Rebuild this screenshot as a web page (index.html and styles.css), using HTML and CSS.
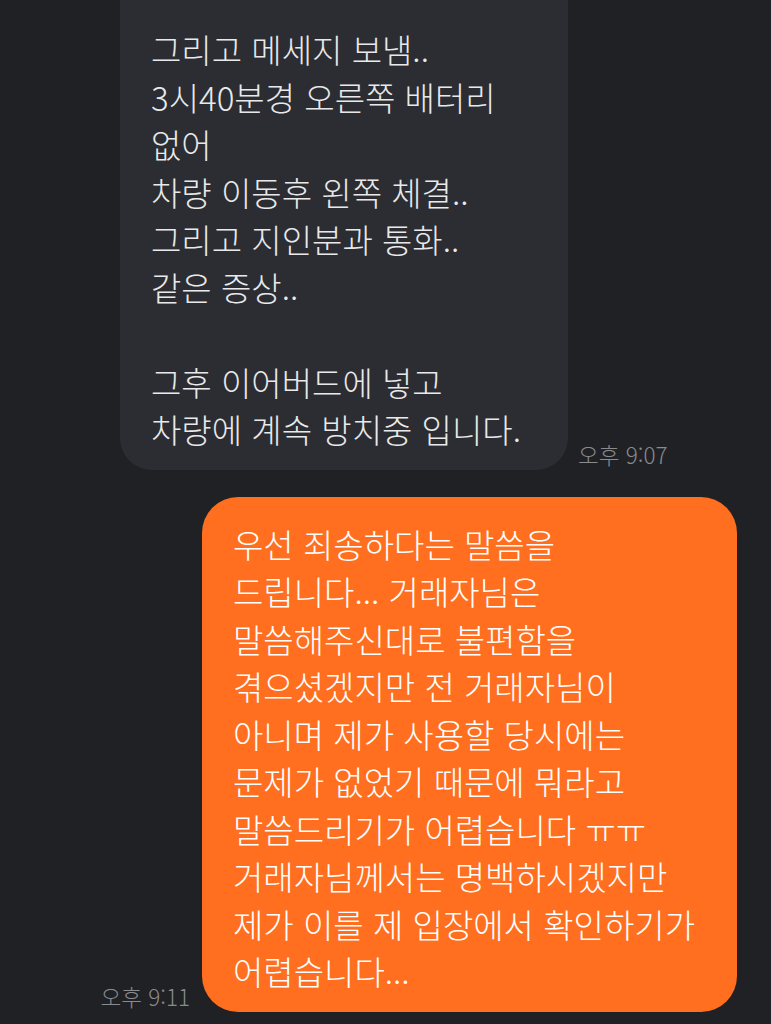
FILE: index.html
```html
<!DOCTYPE html>
<html lang="ko">
<head>
    <meta charset="UTF-8">
    <meta name="viewport" content="width=device-width, initial-scale=1.0">
    <title>채팅</title>
    <link rel="stylesheet" href="styles.css">
</head>
<body>

<div class="chat">
    <div class="row received first">
        <div class="bubble grey">
            그리고 메세지 보냄..<br>
            3시40분경 오른쪽 배터리<br>
            없어<br>
            차량 이동후 왼쪽 체결..<br>
            그리고 지인분과 통화..<br>
            같은 증상..<br>
            <br>
            그후 이어버드에 넣고<br>
            차량에 계속 방치중 입니다.
        </div>
        <span class="time">오후 9:07</span>
    </div>

    <div class="row sent">
        <span class="time">오후 9:11</span>
        <div class="bubble orange">
            우선 죄송하다는 말씀을<br>
            드립니다... 거래자님은<br>
            말씀해주신대로 불편함을<br>
            겪으셨겠지만 전 거래자님이<br>
            아니며 제가 사용할 당시에는<br>
            문제가 없었기 때문에 뭐라고<br>
            말씀드리기가 어렵습니다 ㅠㅠ<br>
            거래자님께서는 명백하시겠지만<br>
            제가 이를 제 입장에서 확인하기가<br>
            어렵습니다...
        </div>
    </div>
</div>

</body>
</html>
```

FILE: styles.css
```css
body {
    margin: 0;
    background-color: #202124;
    font-family: 'Noto Sans CJK KR', 'Noto Sans', sans-serif;
    overflow: hidden;
}
.chat {
    display: flex;
    flex-direction: column;
    gap: 27px;
    padding: 0 34px 0 0;
}
.row {
    display: flex;
    align-items: flex-end;
    gap: 10px;
}
.row.received {
    padding-left: 120px;
}
.row.first {
    margin-top: -30px;
}
.row.sent {
    justify-content: flex-end;
    gap: 12px;
}
.bubble {
    flex-shrink: 0;
    font-size: 33px;
    font-weight: 300;
    line-height: 47.5px;
    white-space: nowrap;
    box-sizing: border-box;
}
.bubble.grey {
    width: 448px;
    background-color: #2b2d32;
    color: #e9e9ea;
    padding: 56px 31px 16px 31px;
    border-radius: 32px;
}
.bubble.orange {
    width: 535px;
    background-color: #ff6f1f;
    color: #ffffff;
    padding: 24px 31px 16px 31px;
    border-radius: 36px;
}
.time {
    font-size: 22.5px;
    font-weight: 300;
    color: #898b8f;
    line-height: 26px;
    padding-bottom: 3px;
    white-space: nowrap;
}
```
